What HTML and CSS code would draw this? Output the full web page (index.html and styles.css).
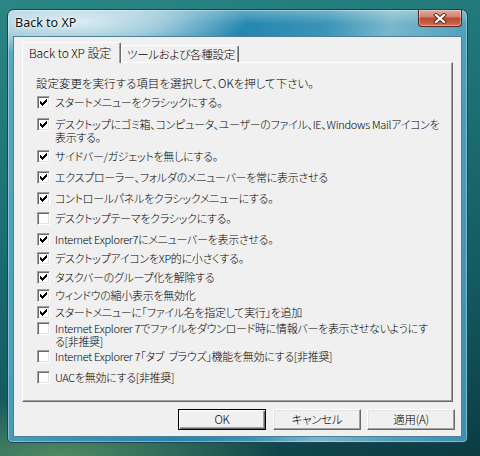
FILE: index.html
```html
<!DOCTYPE html>
<html lang="ja">
<head>
<meta charset="utf-8">
<title>Back to XP</title>
<link rel="stylesheet" href="styles.css">
</head>
<body>
<div class="desktop">
  <div class="window">
    <div class="titlebar">
      <span class="title">Back to XP</span>
      <div class="close">
        <svg width="14" height="11" viewBox="0 0 14 11">
          <path d="M3 2 L11 9 M11 2 L3 9" stroke="#5a2a22" stroke-width="4" stroke-linecap="square" fill="none"/>
          <path d="M3 2 L11 9 M11 2 L3 9" stroke="#ffffff" stroke-width="2.2" stroke-linecap="square" fill="none"/>
        </svg>
      </div>
    </div>
    <div class="client">
      <div class="tabs">
        <div class="tab tab-active">Back to XP 設定</div>
        <div class="tab tab-second">ツールおよび各種設定</div>
      </div>
      <div class="panel">
        <p class="intro">設定変更を実行する項目を選択して、OKを押して下さい。</p>
        <ul class="options">
          <li class="opt"><span class="cb on"><svg viewBox="0 0 7 7" width="7" height="7"><path d="M6 0h1v1h-1z M5 1h2v1h-2z M0 2h1v1h-1z M4 2h3v1h-3z M0 3h2v1h-2z M3 3h3v1h-3z M0 4h5v1h-5z M1 5h3v1h-3z M2 6h1v1h-1z"/></svg></span><span class="lbl">スタートメニューをクラシックにする。</span></li>
          <li class="opt g9"><span class="cb on"><svg viewBox="0 0 7 7" width="7" height="7"><path d="M6 0h1v1h-1z M5 1h2v1h-2z M0 2h1v1h-1z M4 2h3v1h-3z M0 3h2v1h-2z M3 3h3v1h-3z M0 4h5v1h-5z M1 5h3v1h-3z M2 6h1v1h-1z"/></svg></span><span class="lbl">デスクトップにゴミ箱、コンピュータ、ユーザーのファイル、IE、Windows Mailアイコンを<br>表示する。</span></li>
          <li class="opt g6"><span class="cb on"><svg viewBox="0 0 7 7" width="7" height="7"><path d="M6 0h1v1h-1z M5 1h2v1h-2z M0 2h1v1h-1z M4 2h3v1h-3z M0 3h2v1h-2z M3 3h3v1h-3z M0 4h5v1h-5z M1 5h3v1h-3z M2 6h1v1h-1z"/></svg></span><span class="lbl">サイドバー/ガジェットを無しにする。</span></li>
          <li class="opt g8"><span class="cb on"><svg viewBox="0 0 7 7" width="7" height="7"><path d="M6 0h1v1h-1z M5 1h2v1h-2z M0 2h1v1h-1z M4 2h3v1h-3z M0 3h2v1h-2z M3 3h3v1h-3z M0 4h5v1h-5z M1 5h3v1h-3z M2 6h1v1h-1z"/></svg></span><span class="lbl">エクスプローラー、フォルダのメニューバーを常に表示させる</span></li>
          <li class="opt g8"><span class="cb on"><svg viewBox="0 0 7 7" width="7" height="7"><path d="M6 0h1v1h-1z M5 1h2v1h-2z M0 2h1v1h-1z M4 2h3v1h-3z M0 3h2v1h-2z M3 3h3v1h-3z M0 4h5v1h-5z M1 5h3v1h-3z M2 6h1v1h-1z"/></svg></span><span class="lbl">コントロールパネルをクラシックメニューにする。</span></li>
          <li class="opt g7"><span class="cb"></span><span class="lbl">デスクトップテーマをクラシックにする。</span></li>
          <li class="opt g8"><span class="cb on"><svg viewBox="0 0 7 7" width="7" height="7"><path d="M6 0h1v1h-1z M5 1h2v1h-2z M0 2h1v1h-1z M4 2h3v1h-3z M0 3h2v1h-2z M3 3h3v1h-3z M0 4h5v1h-5z M1 5h3v1h-3z M2 6h1v1h-1z"/></svg></span><span class="lbl">Internet Explorer7にメニューバーを表示させる。</span></li>
          <li class="opt g6"><span class="cb on"><svg viewBox="0 0 7 7" width="7" height="7"><path d="M6 0h1v1h-1z M5 1h2v1h-2z M0 2h1v1h-1z M4 2h3v1h-3z M0 3h2v1h-2z M3 3h3v1h-3z M0 4h5v1h-5z M1 5h3v1h-3z M2 6h1v1h-1z"/></svg></span><span class="lbl">デスクトップアイコンをXP的に小さくする。</span></li>
          <li class="opt g6"><span class="cb on"><svg viewBox="0 0 7 7" width="7" height="7"><path d="M6 0h1v1h-1z M5 1h2v1h-2z M0 2h1v1h-1z M4 2h3v1h-3z M0 3h2v1h-2z M3 3h3v1h-3z M0 4h5v1h-5z M1 5h3v1h-3z M2 6h1v1h-1z"/></svg></span><span class="lbl">タスクバーのグループ化を解除する</span></li>
          <li class="opt g5"><span class="cb on"><svg viewBox="0 0 7 7" width="7" height="7"><path d="M6 0h1v1h-1z M5 1h2v1h-2z M0 2h1v1h-1z M4 2h3v1h-3z M0 3h2v1h-2z M3 3h3v1h-3z M0 4h5v1h-5z M1 5h3v1h-3z M2 6h1v1h-1z"/></svg></span><span class="lbl">ウィンドウの縮小表示を無効化</span></li>
          <li class="opt g4"><span class="cb on"><svg viewBox="0 0 7 7" width="7" height="7"><path d="M6 0h1v1h-1z M5 1h2v1h-2z M0 2h1v1h-1z M4 2h3v1h-3z M0 3h2v1h-2z M3 3h3v1h-3z M0 4h5v1h-5z M1 5h3v1h-3z M2 6h1v1h-1z"/></svg></span><span class="lbl">スタートメニューに「ファイル名を指定して実行」を追加</span></li>
          <li class="opt g3"><span class="cb"></span><span class="lbl tight">Internet Explorer 7でファイルをダウンロード時に情報バーを表示させないようにす<br>る[非推奨]</span></li>
          <li class="opt g3"><span class="cb"></span><span class="lbl">Internet Explorer 7「タブ&nbsp; ブラウズ」機能を無効にする[非推奨]</span></li>
          <li class="opt g8"><span class="cb"></span><span class="lbl">UACを無効にする[非推奨]</span></li>
        </ul>
      </div>
      <div class="buttons">
        <div class="btn btn-default">OK</div>
        <div class="btn btn-cancel">キャンセル</div>
        <div class="btn">適用(A)</div>
      </div>
    </div>
  </div>
</div>
</body>
</html>
```

FILE: styles.css
```css
* { box-sizing: border-box; }
html, body { margin: 0; padding: 0; }
body {
  width: 480px;
  height: 456px;
  overflow: hidden;
  font-family: "Noto Sans CJK JP", "Noto Sans", sans-serif;
  font-size: 11px;
  font-weight: 300;
  letter-spacing: -0.3px;
  font-feature-settings: "palt";
  color: #000;
}
.desktop {
  width: 480px;
  height: 456px;
  padding: 9px 0 0 7px;
  background:
    radial-gradient(ellipse 220px 60px at 60px 456px, #4f8a63 0%, rgba(79,138,99,0) 100%),
    linear-gradient(165deg, #2a8785 0%, #1c6f72 40%, #135a5f 70%, #0b3c42 100%);
}
.window {
  width: 461px;
  height: 434px;
  display: flex;
  flex-direction: column;
  border: 1px solid #23414d;
  border-radius: 7px 7px 5px 5px;
  padding: 0 5px 5px 5px;
  background:
    radial-gradient(ellipse 170px 34px at 70px 12px, rgba(228,240,245,0.95) 0%, rgba(228,240,245,0.6) 50%, rgba(228,240,245,0) 100%),
    linear-gradient(180deg, rgba(255,255,255,0.3) 0px, rgba(255,255,255,0) 14px),
    linear-gradient(100deg, #5da6c0 0%, #3f98b8 20%, #2387b0 45%, #3b94b8 60%, #7ab8cb 72%, #4fa0bd 86%, #3890b0 100%);
  box-shadow: inset 0 0 0 1px rgba(255,255,255,0.35);
}
.titlebar {
  height: 26px;
  flex: none;
  display: flex;
  justify-content: space-between;
  align-items: flex-start;
}
.title {
  font-family: "Noto Sans", sans-serif;
  font-size: 12.5px;
  font-weight: 400;
  letter-spacing: 0;
  line-height: 14px;
  margin: 6px 0 0 2px;
  color: #111;
  text-shadow: 0 0 6px #fff, 0 0 3px #fff;
}
.close {
  width: 44px;
  height: 17px;
  border: 1px solid #5e2218;
  border-top: none;
  border-radius: 0 0 4px 4px;
  background: linear-gradient(180deg, #e4ab9d 0%, #d48672 40%, #bb4a33 52%, #c45c42 80%, #d2785e 100%);
  box-shadow: inset 0 0 0 1px rgba(255,255,255,0.35);
  display: flex;
  align-items: center;
  justify-content: center;
}
.close svg { display: block; }
.client {
  flex: 1;
  display: flex;
  flex-direction: column;
  background: #f0f0f0;
  border: 1px solid #4f7f99;
  padding: 5px 6px 0 8px;
}
.tabs {
  display: flex;
  align-items: flex-end;
  height: 20px;
}
.tab {
  background: #f0f0f0;
  border-top: 1px solid #fff;
  border-left: 1px solid #fff;
  border-right: 1px solid #696969;
  box-shadow: inset -1px 0 0 #a0a0a0;
  border-radius: 2px 2px 0 0;
  white-space: nowrap;
  line-height: 14px;
  font-size: 11.5px;
}
.tab-active {
  width: 99px;
  height: 21px;
  margin-bottom: -1px;
  padding: 3px 0 0 6px;
  position: relative;
  z-index: 1;
  font-size: 12px;
  letter-spacing: -0.1px;
}
.tab-second {
  width: 118px;
  height: 17px;
  padding: 1px 0 0 5px;
}
.panel {
  width: 431px;
  height: 340px;
  flex: none;
  border-top: 1px solid #fff;
  border-left: 1px solid #fff;
  border-right: 1px solid #696969;
  border-bottom: 1px solid #696969;
  box-shadow: inset -1px -1px 0 #a0a0a0;
  padding: 14px 0 0 13px;
}
.intro {
  margin: 0;
  line-height: 13px;
  white-space: nowrap;
  font-size: 11.5px;
  letter-spacing: 0;
}
.options {
  list-style: none;
  margin: 6px 0 0 0;
  padding: 0;
  display: flex;
  flex-direction: column;
}
.opt {
  display: flex;
  align-items: flex-start;
}
.g3 { margin-top: 3px; }
.g4 { margin-top: 4px; }
.g5 { margin-top: 5px; }
.g6 { margin-top: 6px; }
.g7 { margin-top: 7px; }
.g8 { margin-top: 8px; }
.g9 { margin-top: 9px; }
.cb {
  flex: none;
  width: 13px;
  height: 13px;
  margin-left: 1px;
  padding: 2px;
  background: #fff;
  border: 1px solid;
  border-color: #a0a0a0 #fff #fff #a0a0a0;
  box-shadow: inset 1px 1px 0 #696969, inset -1px -1px 0 #e3e3e3;
}
.cb svg {
  display: block;
  fill: #000;
  shape-rendering: crispEdges;
}
.lbl {
  margin-left: 5px;
  line-height: 13px;
  white-space: nowrap;
}
.lbl.tight { line-height: 12.5px; }
.buttons {
  display: flex;
  justify-content: flex-end;
  gap: 6px;
  margin-top: 7px;
}
.btn {
  width: 88px;
  height: 21px;
  display: flex;
  align-items: center;
  justify-content: center;
  background: #f0f0f0;
  border: 1px solid;
  border-color: #fff #696969 #696969 #fff;
  box-shadow: inset -1px -1px 0 #a0a0a0, inset 1px 1px 0 #e3e3e3;
  line-height: 13px;
  font-size: 11.5px;
}
.btn-cancel { margin-left: 1px; }
.btn-default {
  border: 1px solid #000;
  box-shadow: inset 1px 1px 0 #fff, inset -1px -1px 0 #696969, inset -2px -2px 0 #a0a0a0;
}
```
